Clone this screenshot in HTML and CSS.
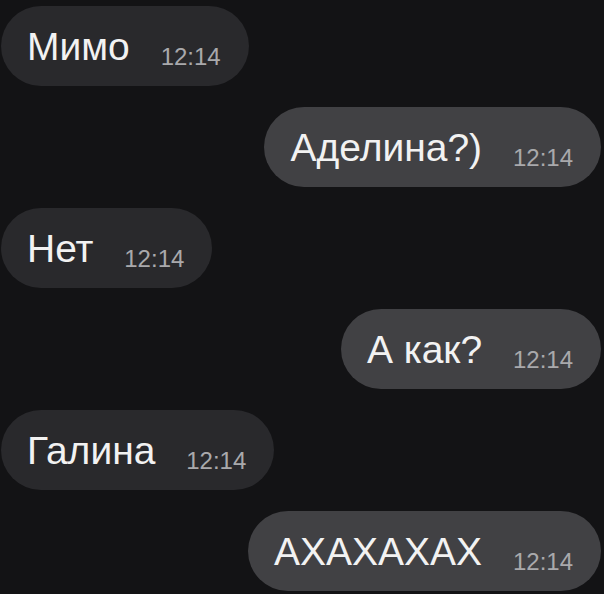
FILE: index.html
```html
<!DOCTYPE html>
<html lang="ru">
<head>
    <meta charset="UTF-8">
    <meta name="viewport" content="width=device-width, initial-scale=1.0">
    <title>Чат</title>
    <link rel="stylesheet" href="styles.css">
</head>
<body>
    <div class="chat">
        <div class="row in">
            <div class="bubble">Мимо <span class="time">12:14</span></div>
        </div>
        <div class="row out">
            <div class="bubble">Аделина?) <span class="time">12:14</span></div>
        </div>
        <div class="row in">
            <div class="bubble">Нет <span class="time">12:14</span></div>
        </div>
        <div class="row out">
            <div class="bubble">А как? <span class="time">12:14</span></div>
        </div>
        <div class="row in">
            <div class="bubble">Галина <span class="time">12:14</span></div>
        </div>
        <div class="row out">
            <div class="bubble">АХАХАХАХ <span class="time">12:14</span></div>
        </div>
    </div>
</body>
</html>
```

FILE: styles.css
```css
:root {
    --bg: #131315;
    --bubble-in: #29292c;
    --bubble-out: #414144;
    --text: #f2f2f2;
    --time: #a9a9ac;
}
html, body {
    margin: 0;
    padding: 0;
    background: var(--bg);
}
body {
    font-family: 'Liberation Sans', Arial, sans-serif;
    color: var(--text);
    width: 604px;
    height: 594px;
    overflow: hidden;
}
.chat {
    display: flex;
    flex-direction: column;
    gap: 21px;
    padding: 6px 3px 0 1px;
}
.row {
    display: flex;
}
.row.in {
    justify-content: flex-start;
}
.row.out {
    justify-content: flex-end;
}
.bubble {
    height: 80px;
    box-sizing: border-box;
    padding: 0 28px 0 26px;
    border-radius: 40px;
    font-size: 39px;
    line-height: 80px;
    white-space: nowrap;
    padding-top: 2px;
    line-height: 78px;
}
.in .bubble {
    background: var(--bubble-in);
}
.out .bubble {
    background: var(--bubble-out);
}
.time {
    font-size: 24px;
    color: var(--time);
    margin-left: 20px;
    vertical-align: -5px;
}
```
